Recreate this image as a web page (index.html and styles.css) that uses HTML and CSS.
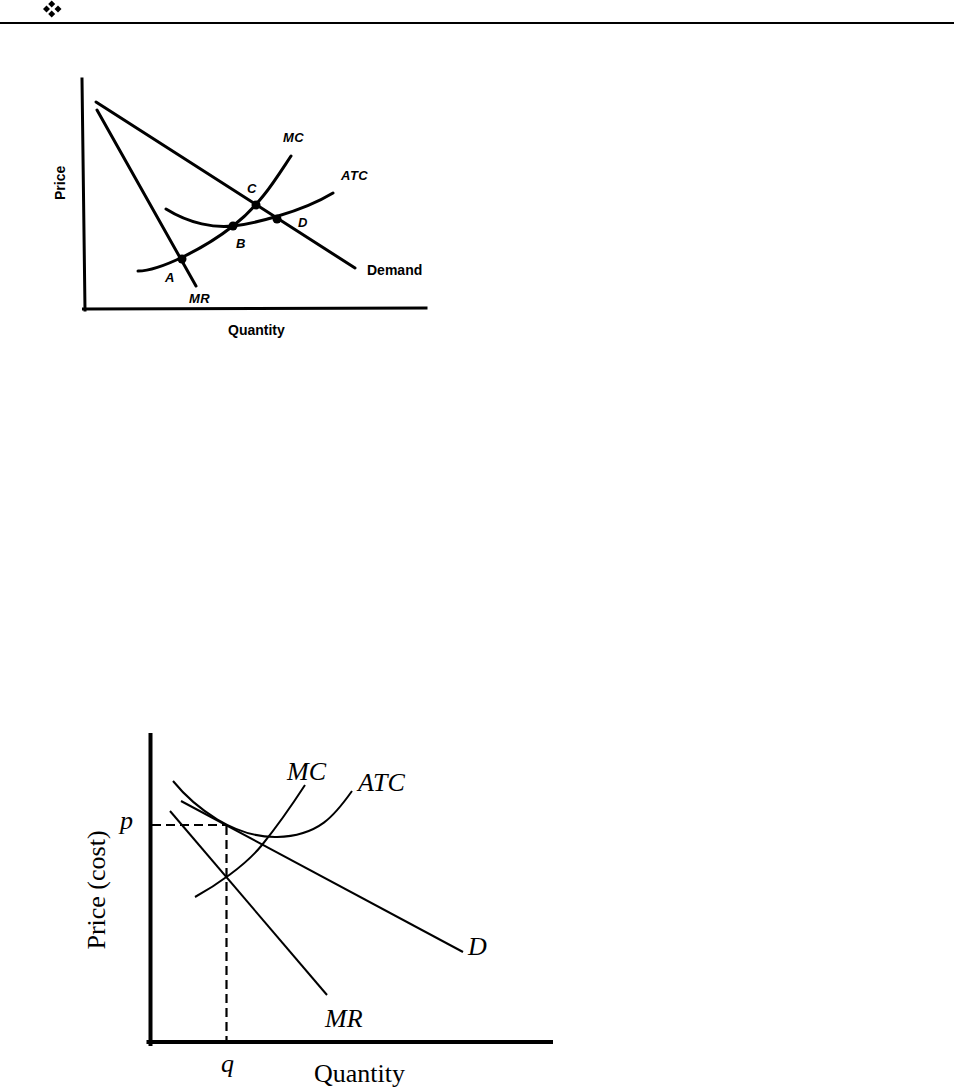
FILE: index.html
```html
<!DOCTYPE html>
<html lang="en">
<head>
<meta charset="utf-8">
<title>Monopolistic competition diagrams</title>
<link rel="stylesheet" href="styles.css">
</head>
<body>
<header class="running-head">
  <svg class="ornament" width="20" height="18" viewBox="0 0 20 18" aria-hidden="true">
    <path d="M8.7 0.5 L12.2 4 L8.7 7.5 L5.2 4 Z"/>
    <path d="M3.5 5.6 L7 9.1 L3.5 12.6 L0 9.1 Z"/>
    <path d="M15 5.6 L18.5 9.1 L15 12.6 L11.5 9.1 Z"/>
    <path d="M8.7 10.4 L12.2 13.9 L8.7 17.4 L5.2 13.9 Z"/>
  </svg>
</header>

<figure class="fig fig-one">
  <svg class="chart" width="954" height="340" viewBox="0 24 954 340">
    <line class="axis1" x1="82" y1="79" x2="85" y2="310"/>
    <line class="axis1" x1="83.5" y1="309" x2="426" y2="308"/>
    <line class="curve1" x1="96" y1="102" x2="355" y2="268"/>
    <line class="curve1" x1="97" y1="110" x2="196" y2="286"/>
    <path class="curve1" d="M138,271 C160,271 205,248 233,226 S 275,180 291,156"/>
    <path class="curve1" d="M166,209 C190,224 215,228 233,226 S 300,213 333,193"/>
    <circle class="dot" cx="182" cy="259" r="4.5"/>
    <circle class="dot" cx="233" cy="226" r="4.5"/>
    <circle class="dot" cx="256" cy="205" r="4.5"/>
    <circle class="dot" cx="277" cy="219" r="4.5"/>
    <text class="lbl1 it" x="283" y="142">MC</text>
    <text class="lbl1 it" x="341" y="180">ATC</text>
    <text class="lbl1 it" x="247" y="193">C</text>
    <text class="lbl1 it" x="298" y="227">D</text>
    <text class="lbl1 it" x="236" y="248">B</text>
    <text class="lbl1 it" x="165" y="282">A</text>
    <text class="lbl1 it" x="189" y="303">MR</text>
    <text class="lbl1" x="367" y="275">Demand</text>
    <text class="lbl1" x="228" y="335">Quantity</text>
    <text class="lbl1" transform="translate(65,200) rotate(-90)">Price</text>
  </svg>
</figure>

<figure class="fig fig-two">
  <svg class="chart" width="954" height="391" viewBox="0 700 954 391">
    <line class="axis2" x1="150.5" y1="735" x2="150.5" y2="1044"/>
    <line class="axis2" x1="148.5" y1="1042" x2="551" y2="1042"/>
    <line class="dash" x1="152" y1="825" x2="227" y2="825"/>
    <line class="dash" x1="226.5" y1="826" x2="226.5" y2="1040"/>
    <line class="curve2" x1="181" y1="801" x2="463" y2="952"/>
    <line class="curve2" x1="170" y1="811" x2="327" y2="995"/>
    <path class="curve2" d="M173,781 C195,808 235,838 277,837 S 335,815 352,791"/>
    <path class="curve2" d="M195,897 C215,886 245,866 262,845 S 292,805 305,785"/>
    <text class="lbl2 it" x="287" y="780">MC</text>
    <text class="lbl2 it" x="358" y="791">ATC</text>
    <text class="lbl2 it" x="120" y="829">p</text>
    <text class="lbl2 it" x="468" y="955">D</text>
    <text class="lbl2 it" x="325" y="1027">MR</text>
    <text class="lbl2 it" x="221" y="1072">q</text>
    <text class="lbl2" x="314" y="1082">Quantity</text>
    <text class="lbl2" text-anchor="middle" transform="translate(105,890) rotate(-90)">Price (cost)</text>
  </svg>
</figure>
</body>
</html>
```

FILE: styles.css
```css
html, body {
  margin: 0;
  padding: 0;
  background: #fff;
}

body {
  width: 954px;
  font-family: "Liberation Serif", "Times New Roman", serif;
  color: #000;
}

.running-head {
  height: 22px;
  border-bottom: 2px solid #000;
  display: flex;
  align-items: flex-start;
  padding-left: 43px;
  box-sizing: content-box;
}

.ornament {
  display: block;
  fill: #000;
}

.fig {
  margin: 0;
  padding: 0;
}

.fig-two {
  margin-top: 336px;
}

.chart {
  display: block;
}

.axis1 {
  stroke: #000;
  stroke-width: 3;
  stroke-linecap: square;
}

.curve1 {
  fill: none;
  stroke: #000;
  stroke-width: 3;
  stroke-linecap: round;
}

.dot {
  fill: #000;
}

.lbl1 {
  font-family: "Liberation Sans", Arial, sans-serif;
  font-weight: bold;
  font-size: 14px;
  fill: #000;
}

.lbl1.it {
  font-size: 13px;
  font-style: italic;
  letter-spacing: 0.5px;
}

.axis2 {
  stroke: #000;
  stroke-width: 4;
  stroke-linecap: square;
}

.curve2 {
  fill: none;
  stroke: #000;
  stroke-width: 2;
}

.dash {
  stroke: #000;
  stroke-width: 2.2;
  stroke-dasharray: 9 5;
}

.lbl2 {
  font-family: "Liberation Serif", "Times New Roman", serif;
  font-size: 26px;
  fill: #000;
}

.lbl2.it {
  font-style: italic;
}
```
